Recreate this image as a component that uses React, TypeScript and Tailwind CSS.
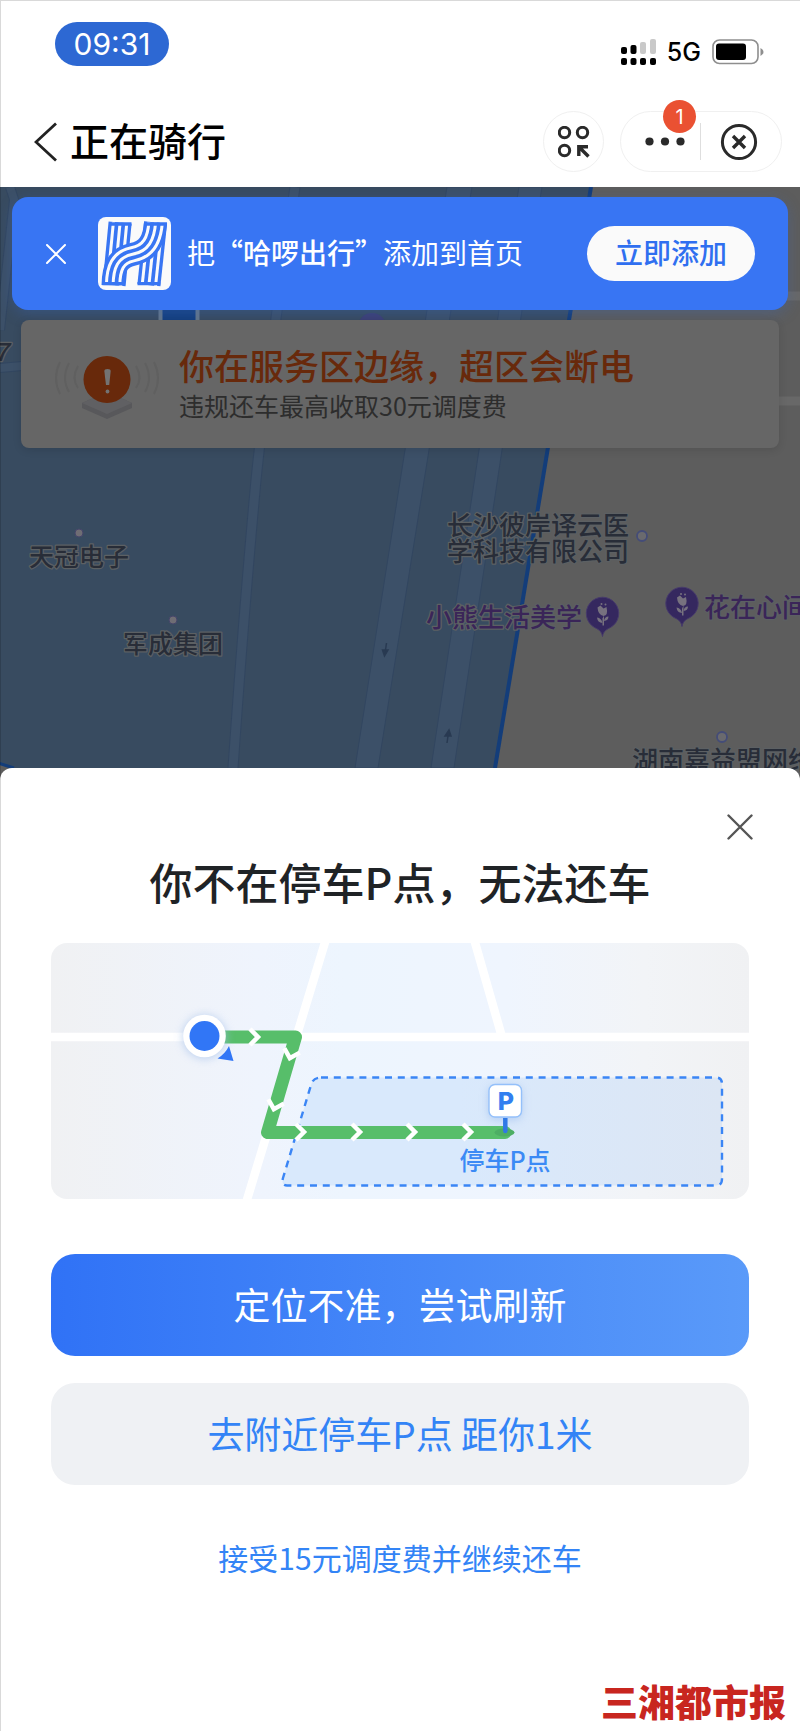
const LOGO_STEM_L = 'M361 113 L343 300'
const LOGO_STEM_R = 'M467 113 L447 300'
const LOGO_BAND = 'M340 300 C341 248 354 217 398 208 C446 199 463 165 467 113'

const CHEVRONS = [
  { x: 261, y: 1037, r: 0 },
  { x: 289, y: 1061, r: 106 },
  { x: 273, y: 1112, r: 106 },
  { x: 307, y: 1132, r: 0 },
  { x: 363, y: 1132, r: 0 },
  { x: 418, y: 1132, r: 0 },
  { x: 474, y: 1132, r: 0 },
]

function Stripes({ d }: { d: string }) {
  return (
    <g fill="none">
      <path d={d} stroke="#3875f3" strokeWidth="69" />
      <path d={d} stroke="#fafafa" strokeWidth="49" />
      <path d={d} stroke="#3875f3" strokeWidth="31" />
      <path d={d} stroke="#fafafa" strokeWidth="9" />
    </g>
  )
}

function HelloLogo() {
  return (
    <svg viewBox="295 97 218 217" className="size-[73px] shrink-0 rounded-lg bg-[#fafafa]" aria-hidden="true">
      <Stripes d={LOGO_STEM_L} />
      <Stripes d={LOGO_STEM_R} />
      <Stripes d={LOGO_BAND} />
      <path d="M328 117.500H395M433 117.500H501M308 295.500H374M413 295.500H481" stroke="#3875f3" strokeWidth="10" />
    </svg>
  )
}

function StatusBar() {
  return (
    <div className="flex items-start justify-between pl-[55px] pr-9">
      <div className="flex h-11 w-[114px] items-center justify-center rounded-full bg-[#2d68d3] font-['Inter'] text-[30px] leading-none text-white">09:31</div>
      <div className="flex h-[60px] items-center gap-[11px]">
        <svg width="35" height="26" viewBox="0 0 35 26" aria-hidden="true">
          <rect x="0" y="8" width="6" height="7" rx="2" />
          <rect x="9.500" y="6" width="6" height="9" rx="2" />
          <rect x="19" y="3" width="6" height="12" rx="2" fill="#c9c9c9" />
          <rect x="29" y="0" width="6" height="15" rx="2" fill="#c9c9c9" />
          <rect x="0" y="19" width="6" height="7" rx="2" />
          <rect x="9.500" y="19" width="6" height="7" rx="2" />
          <rect x="19" y="19" width="6" height="7" rx="2" />
          <rect x="29" y="19" width="6" height="7" rx="2" />
        </svg>
        <span className="font-['Inter'] text-[25px] font-medium leading-none text-black">5G</span>
        <svg width="52" height="26" viewBox="0 0 52 26" aria-hidden="true">
          <rect x="1" y="1" width="45" height="23.500" rx="6.500" fill="none" stroke="#8e8e8e" strokeWidth="1.600" />
          <rect x="4" y="4.500" width="30" height="16.500" rx="3" />
          <path d="M48.500 9 Q51.500 10.500 51.500 13 Q51.500 15.500 48.500 17Z" fill="#8e8e8e" />
        </svg>
      </div>
    </div>
  )
}

function NavBar() {
  return (
    <div className="mt-[29px] flex items-center pb-[15px] pl-[22px] pr-[18px]">
      <button aria-label="返回" className="flex h-[61px] w-12 items-center justify-center text-[#222]">
        <svg width="24" height="40" viewBox="0 0 24 40" fill="none" stroke="currentColor" strokeWidth="2.800" aria-hidden="true">
          <path d="M22 1.500 L2 20 L22 38.500" />
        </svg>
      </button>
      <h1 className="pb-1 text-[39px] font-medium leading-[57px] text-black">正在骑行</h1>
      <button aria-label="扫一扫" className="ml-auto flex size-[61px] items-center justify-center rounded-full border border-[#f0f0f0]">
        <svg width="32" height="32" viewBox="0 0 32 32" fill="none" stroke="#2a2a2a" strokeWidth="3" aria-hidden="true">
          <circle cx="6.500" cy="6.500" r="5.200" />
          <circle cx="24.500" cy="6.500" r="5.200" />
          <circle cx="6.500" cy="24.500" r="5.200" />
          <path d="M20.800 30V20.800H30M21.500 21.500L30.500 30.500" strokeWidth="3.400" />
        </svg>
      </button>
      <div className="ml-4 flex h-[61px] w-[162px] items-center rounded-full border border-[#f0f0f0]">
        <button aria-label="更多" className="relative flex h-full flex-1 items-center justify-center pl-2">
          <svg width="40" height="9" viewBox="0 0 40 9" fill="#2a2a2a" aria-hidden="true">
            <circle cx="4.500" cy="4.500" r="4.100" />
            <circle cx="20" cy="4.500" r="4.100" />
            <circle cx="35.500" cy="4.500" r="4.100" />
          </svg>
          <span className="absolute -top-3 right-1 flex size-[33px] items-center justify-center rounded-full bg-[#ea5132] font-['Inter'] text-xl leading-none text-white">1</span>
        </button>
        <span className="h-[37px] w-px bg-[#dedede]" />
        <button aria-label="关闭小程序" className="flex h-full w-20 items-center justify-center pr-1">
          <svg width="38" height="38" viewBox="0 0 38 38" fill="none" stroke="#2a2a2a" aria-hidden="true">
            <circle cx="19" cy="19" r="16.600" strokeWidth="3" />
            <path d="M13 13L25 25M25 13L13 25" strokeWidth="3.400" />
          </svg>
        </button>
      </div>
    </div>
  )
}

function FlowerPin({ x, y }: { x: number; y: number }) {
  return (
    <g transform={`translate(${x} ${y})`}>
      <path d="M0 23 C-1 17 -5 15.500 -8 14 A16.200 16.200 0 1 1 8 14 C5 15.500 1 17 0 23Z" fill="#35285f" stroke="#463a6b" />
      <g fill="#77727f">
        <path d="M-5 -6 L-2 -8 L1 -5 L4 -6.500 Q6 2 1 2.500 Q-4.500 1.500 -5 -6Z" />
        <circle cx="-1" cy="-9.500" r="1" />
        <circle cx="3" cy="-9" r="1" />
        <path d="M0 5 L1.500 2 V12 H0Z" />
        <path d="M0 9.500 Q-5 9 -5.500 4 Q-1 4.500 0 9.500ZM1.500 7.500 Q2 3 6 3 Q6 7 1.500 7.500Z" />
      </g>
    </g>
  )
}

function CityMap() {
  return (
    <svg
      viewBox="0 187 800 593"
      preserveAspectRatio="xMidYMin slice"
      className="absolute inset-0 size-full"
      role="img"
      aria-label="地图"
    >
      <rect y="187" width="800" height="593" fill="#5d5d5d" />
      <path d="M780 296H800M776 401H800" stroke="#686868" strokeWidth="9" />
      <path d="M0 187H591L495 768H14L0 763Z" fill="#384b60" />
      <g fill="none" stroke="#324660" strokeWidth="11">
        <path d="M295 187Q266 380 256 480Q244 610 233 768" />
        <path d="M0 368L22 366M10 187L24 230M0 330L14 200" strokeWidth="10" />
      </g>
      <g fill="none" stroke="#3c5068" strokeWidth="9">
        <path d="M295 187Q266 380 256 480Q244 610 233 768" />
        <path d="M0 368L22 366M10 187L24 230M0 330L14 200" strokeWidth="8" />
      </g>
      <path d="M447 187H472L451 310L429 450L378 768H355L405 450L427 310ZM519 187H542L522 310L502 450L454 768H431L479 450L499 310Z" fill="#3c5068" stroke="#324660" />
      <path d="M591 187L495 768" stroke="#133d7a" strokeWidth="4" />
      <path d="M-2 763L14 768" stroke="#133d7a" strokeWidth="3" />
      <rect x="160.500" y="300" width="37" height="30" fill="#133f80" stroke="#66788a" strokeWidth="4" />
      <circle cx="372" cy="327" r="14" fill="#3d3f74" />
      <g fill="#293a52" stroke="#293a52" strokeWidth="1.500">
        <path d="M386.500 643L385.500 650" /><path d="M382.500 650H388L384.500 656Z" />
        <path d="M447 743L448 736" /><path d="M445 736H451L449 730Z" />
      </g>
      <circle cx="79" cy="533" r="4" fill="#6f6d74" stroke="#45456a" />
      <circle cx="173" cy="620" r="4" fill="#6f6d74" stroke="#45456a" />
      <g fill="#6a6a6e" stroke="#444c78" strokeWidth="1.800">
        <circle cx="642" cy="536" r="5" />
        <circle cx="722" cy="737" r="5" />
      </g>
      <FlowerPin x={602.5} y={613.5} />
      <FlowerPin x={682} y={603.5} />
      <g fontSize="25" fontWeight="500" fill="#282d38" stroke="#5c6063" strokeWidth="2.500" strokeLinejoin="round" paintOrder="stroke">
        <text x="-6" y="361" fontStyle="italic">7</text>
        <text x="79" y="566" textAnchor="middle">天冠电子</text>
        <text x="173" y="653" textAnchor="middle">军成集团</text>
        <g fontSize="26">
          <text x="447" y="535">长沙彼岸译云医</text>
          <text x="447" y="561">学科技有限公司</text>
          <text x="632" y="770">湖南嘉益盟网络</text>
        </g>
        <g fontSize="26" fill="#3a2558">
          <text x="426" y="627">小熊生活美学</text>
          <text x="704" y="617">花在心间</text>
        </g>
      </g>
    </svg>
  )
}

function AddHomeBanner() {
  return (
    <div className="flex h-[113px] items-center rounded-2xl bg-[#3875f3] pl-8 pr-[33px] text-[28px] text-white shadow-[0_4px_14px_rgba(56,100,180,0.35)]">
      <button aria-label="关闭提示" className="flex size-6 items-center justify-center">
        <svg width="20" height="20" viewBox="0 0 20 20" stroke="currentColor" strokeWidth="2" strokeLinecap="round" aria-hidden="true">
          <path d="M1 1L19 19M19 1L1 19" />
        </svg>
      </button>
      <div className="ml-[30px]"><HelloLogo /></div>
      <p className="ml-4 whitespace-nowrap pb-1 leading-10">把<span className="font-medium">“哈啰出行”</span>添加到首页</p>
      <button className="ml-auto h-[55px] w-[168px] rounded-full bg-[#fafafa] pb-1 font-medium text-[#2f6ff0]">立即添加</button>
    </div>
  )
}

function WarnIcon() {
  return (
    <svg width="115" height="76" viewBox="50 346 115 76" fill="none" className="shrink-0" aria-hidden="true">
      <path d="M82 403L107 392L132 403V408L107 419L82 408Z" fill="#58585b" />
      <path d="M82 403L107 414L132 403L107 392Z" fill="#606063" />
      <g stroke="#606060" strokeWidth="2">
        <path d="M60 362Q52 378 60 394M69 363Q61 378 69 392M78 366Q71 378 78 388" />
        <path d="M154 362Q162 378 154 394M145 363Q153 378 145 392M136 366Q143 378 136 388" />
      </g>
      <circle cx="107" cy="379.500" r="23.500" fill="#68290b" />
      <path d="M104.300 371Q104.300 369 107.500 369Q110.700 369 110.700 371L109.200 385H106Z" fill="#737373" />
      <circle cx="107.500" cy="391.500" r="1.900" fill="#737373" />
    </svg>
  )
}

function RouteMap() {
  return (
    <svg viewBox="51 943 698 256" className="mt-9 block h-auto w-full rounded-2xl" role="img" aria-label="前往停车P点的路线">
      <defs>
        <linearGradient id="ground">
          <stop offset="0" stopColor="#f0f1f3" />
          <stop offset="0.300" stopColor="#eff4fd" />
          <stop offset="0.420" stopColor="#edf5fe" />
          <stop offset="0.650" stopColor="#eff5fe" />
          <stop offset="0.850" stopColor="#f2f4f7" />
          <stop offset="1" stopColor="#f0f1f3" />
        </linearGradient>
        <linearGradient id="zone">
          <stop offset="0.400" stopColor="#d9e9fc" />
          <stop offset="1" stopColor="#dce6f4" />
        </linearGradient>
        <filter id="glow" x="-50%" y="-50%" width="200%" height="200%">
          <feGaussianBlur stdDeviation="4" />
        </filter>
      </defs>
      <rect x="51" y="943" width="698" height="256" fill="url(#ground)" />
      <g fill="none" stroke="#fff" strokeWidth="8.500">
        <path d="M51 1037H749M326 939L246 1203M474 939L502 1037" />
      </g>
      <path
        d="M321 1077.500H716Q722 1077.500 722 1084V1179Q722 1185.500 716 1185.500H287Q281 1185.500 283 1178L311 1085Q313 1077.500 321 1077.500Z"
        fill="url(#zone)" stroke="#3a85f5" strokeWidth="2.400" strokeDasharray="7 5.800"
      />
      <path d="M215 1037H295.500L267.500 1132.500H505" fill="none" stroke="#57be6a" strokeWidth="13" strokeLinejoin="round" strokeLinecap="round" />
      <g fill="none" stroke="#fff" strokeWidth="4.500">
        {CHEVRONS.map(c => (
          <path key={`${c.x}-${c.y}`} d="M-11 -8L-3 0L-11 8" transform={`translate(${c.x} ${c.y}) rotate(${c.r})`} />
        ))}
      </g>
      <circle cx="204.500" cy="1037" r="22" fill="#9dbbe8" filter="url(#glow)" opacity="0.600" />
      <circle cx="204.500" cy="1036" r="21.300" fill="#fff" />
      <circle cx="204.500" cy="1036" r="15" fill="#3176f6" />
      <path d="M229 1046L233.500 1061L217.500 1058.500Q225 1054 229 1046Z" fill="#3176f6" />
      <rect x="488" y="1086" width="34" height="34" rx="7" fill="#8fb4ea" filter="url(#glow)" opacity="0.500" />
      <ellipse cx="504.500" cy="1132.500" rx="10" ry="4" fill="#4dae64" />
      <path d="M505.300 1118V1131" stroke="#3079e6" strokeWidth="4.500" />
      <circle cx="505.300" cy="1131" r="2.200" fill="#3079e6" />
      <rect x="489" y="1084.500" width="32.500" height="32.500" rx="6" fill="#fff" stroke="#94c0fa" strokeWidth="1.400" />
      <text x="506" y="1110" textAnchor="middle" fontFamily="Inter, sans-serif" fontSize="25" fontWeight="800" fill="#327ff0">P</text>
      <text x="505" y="1170" textAnchor="middle" fontSize="25" fontWeight="500" fill="#3b8af5">停车P点</text>
    </svg>
  )
}

export default function App() {
  return (
    <div className="relative bg-white font-['Noto_Sans_CJK_SC',sans-serif]">
      <header className="pt-[22px]">
        <StatusBar />
        <NavBar />
      </header>

      <section className="relative min-h-[593px] px-3 pt-[10px]">
        <CityMap />
        <div className="relative">
          <AddHomeBanner />
          <div className="mx-[9px] mt-[10px] flex h-32 items-center gap-[14px] rounded-lg bg-[#666] pl-[29px] shadow-[0_2px_8px_rgba(0,0,0,0.12)]">
            <WarnIcon />
            <div className="whitespace-nowrap pb-[2px]">
              <h2 className="text-[35px] font-medium leading-[44px] text-[#68290b]">你在服务区边缘，超区会断电</h2>
              <p className="text-[25px] leading-9 text-[#2d2d2d]">违规还车最高收取30元调度费</p>
            </div>
          </div>
        </div>
      </section>

      <main className="relative -mt-3 flex flex-col rounded-t-xl bg-white px-[51px] pb-2 pt-[46px]">
        <button aria-label="关闭" className="-mr-1 flex size-[26px] self-end text-[#555]">
          <svg width="26" height="26" viewBox="0 0 26 26" stroke="currentColor" strokeWidth="2.400" strokeLinecap="round" aria-hidden="true">
            <path d="M1.500 1.500L24.500 24.500M24.500 1.500L1.500 24.500" />
          </svg>
        </button>
        <h2 className="mt-[15px] text-center text-[43px] font-medium leading-[52px] text-[#1f2326]">你不在停车P点，无法还车</h2>
        <RouteMap />
        <button className="mt-[55px] h-[102px] rounded-3xl bg-linear-to-r from-[#3072f6] to-[#5a9af9] text-[37px] text-white">定位不准，尝试刷新</button>
        <button className="mt-[27px] h-[102px] rounded-3xl bg-[#eff1f4] text-[37px] text-[#3384f6]">去附近停车P点 距你1米</button>
        <a href="#accept" className="mt-[52px] text-center text-[30px] leading-10 text-[#3384f6]">接受15元调度费并继续还车</a>
        <p className="-mr-[37px] mt-[102px] self-end text-[37px] font-black leading-[44px] text-[#c8261f]">三湘都市报</p>
      </main>

      <div className="pointer-events-none absolute inset-0 border-l border-t border-black/15" />
    </div>
  )
}
